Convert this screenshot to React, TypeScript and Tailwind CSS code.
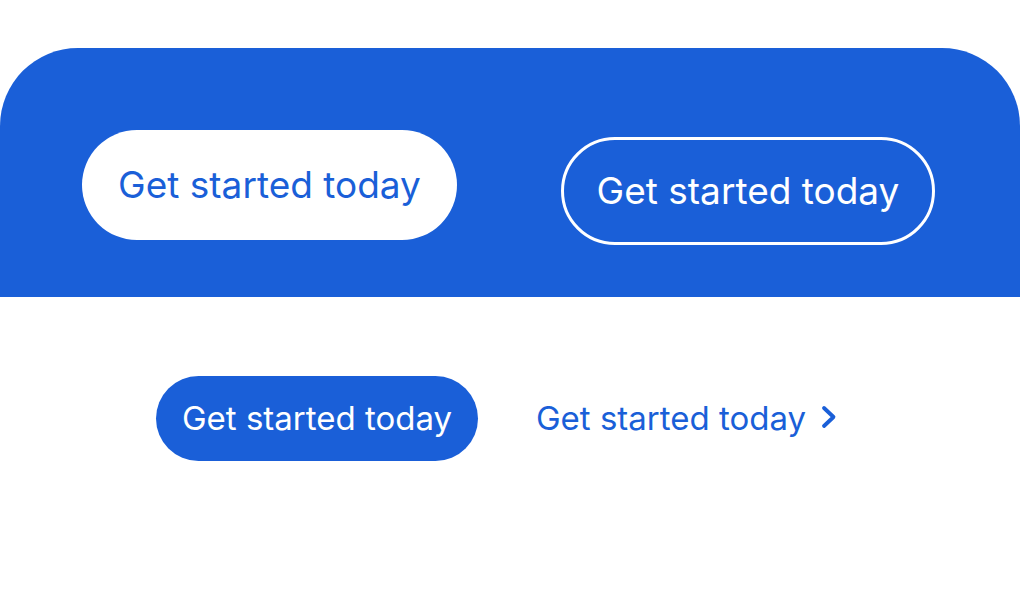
export default function App() {
  return (
    <div
      className="h-[590px] w-[1020px] overflow-hidden bg-white"
      style={{ fontFamily: "Inter, 'Noto Sans', sans-serif" }}
    >
      {/* Blue hero band */}
      <div className="mt-[48px] flex h-[249px] items-start rounded-t-[78px] bg-[#1a5fd8] pl-[82px] pt-[82px]">
        <button
          type="button"
          className="flex h-[110px] w-[375px] items-center justify-center rounded-full bg-white text-[37px] text-[#1a5fd8]"
        >
          Get started today
        </button>
        <button
          type="button"
          className="ml-[104px] mt-[7px] flex h-[108px] w-[374px] items-center justify-center rounded-full border-[3px] border-white text-[37px] text-white"
        >
          Get started today
        </button>
      </div>

      {/* Small variants */}
      <div className="flex items-center pl-[156px] pt-[79px]">
        <button
          type="button"
          className="flex h-[85px] w-[322px] items-center justify-center rounded-full bg-[#1a5fd8] text-[33px] text-white"
        >
          Get started today
        </button>
        <a
          href="#"
          className="ml-[58px] flex items-center gap-[14px] text-[33px] text-[#1a5fd8]"
        >
          Get started today
          <svg width="18" height="26" viewBox="0 0 18 26" fill="none" aria-hidden className="-mt-[4px]">
            <path
              d="M4 4l9.5 9L4 22"
              stroke="#1a5fd8"
              strokeWidth="3.8"
              strokeLinecap="round"
              strokeLinejoin="round"
            />
          </svg>
        </a>
      </div>
    </div>
  );
}
